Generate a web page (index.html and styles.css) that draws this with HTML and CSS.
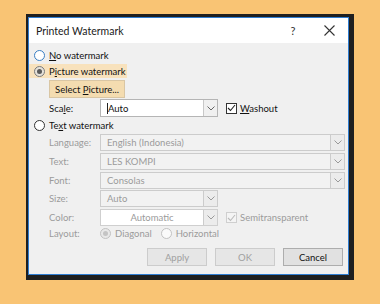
FILE: index.html
```html
<!DOCTYPE html>
<html>
<head>
<meta charset="utf-8">
<link rel="stylesheet" href="styles.css">
</head>
<body>
<div class="frame">
  <div class="dialog">
    <div class="titlebar">
      <span class="title">Printed Watermark</span>
      <span class="help">?</span>
      <span class="close"><svg width="11" height="11" viewBox="0 0 11 11"><path d="M0.5 0.5 L10.5 10.5 M10.5 0.5 L0.5 10.5" stroke="#333" stroke-width="1.1" fill="none"/></svg></span>
    </div>
    <div class="body">
      <div class="radio-row r1"><span class="radio focus"></span><span><u>N</u>o watermark</span></div>
      <div class="radio-row r2 hl"><span class="radio checked"></span><span>P<u>i</u>cture watermark</span></div>
      <div class="indent r3"><span class="btn sel"><span>Select <u>P</u>icture...</span></span></div>
      <div class="field-row r4">
        <span class="lbl">Sca<u>l</u>e:</span>
        <span class="combo short active"><span class="val"><span class="caret"></span><span>Auto</span></span><span class="arrow"><svg width="8" height="5" viewBox="0 0 8 5"><path d="M0.5 0.5 L4 4 L7.5 0.5" stroke="#666" fill="none"/></svg></span></span>
        <span class="check"><span class="box"><svg width="9" height="8" viewBox="0 0 9 8"><path d="M1 4 L3.5 6.5 L8 1" stroke="#222" stroke-width="1.1" fill="none"/></svg></span><span><u>W</u>ashout</span></span>
      </div>
      <div class="radio-row r5"><span class="radio"></span><span>Te<u>x</u>t watermark</span></div>
      <div class="field-row dis r6">
        <span class="lbl">Language:</span>
        <span class="combo long"><span class="val">English (Indonesia)</span><span class="arrow"><svg width="8" height="5" viewBox="0 0 8 5"><path d="M0.5 0.5 L4 4 L7.5 0.5" stroke="#999" fill="none"/></svg></span></span>
      </div>
      <div class="field-row dis r7">
        <span class="lbl">Text:</span>
        <span class="combo long"><span class="val">LES KOMPI</span><span class="arrow"><svg width="8" height="5" viewBox="0 0 8 5"><path d="M0.5 0.5 L4 4 L7.5 0.5" stroke="#999" fill="none"/></svg></span></span>
      </div>
      <div class="field-row dis r8">
        <span class="lbl">Font:</span>
        <span class="combo long"><span class="val">Consolas</span><span class="arrow"><svg width="8" height="5" viewBox="0 0 8 5"><path d="M0.5 0.5 L4 4 L7.5 0.5" stroke="#999" fill="none"/></svg></span></span>
      </div>
      <div class="field-row dis r9">
        <span class="lbl">Size:</span>
        <span class="combo short"><span class="val">Auto</span><span class="arrow"><svg width="8" height="5" viewBox="0 0 8 5"><path d="M0.5 0.5 L4 4 L7.5 0.5" stroke="#999" fill="none"/></svg></span></span>
      </div>
      <div class="field-row dis r10">
        <span class="lbl">Color:</span>
        <span class="combo short white"><span class="val center">Automatic</span><span class="arrow"><svg width="8" height="5" viewBox="0 0 8 5"><path d="M0.5 0.5 L4 4 L7.5 0.5" stroke="#999" fill="none"/></svg></span></span>
        <span class="check dis"><span class="box"><svg width="9" height="8" viewBox="0 0 9 8"><path d="M1 4 L3.5 6.5 L8 1" stroke="#bbb" stroke-width="1.1" fill="none"/></svg></span><span>Semitransparent</span></span>
      </div>
      <div class="field-row dis r11">
        <span class="lbl">Layout:</span>
        <span class="opt"><span class="radio small dchecked"></span><span>Diagonal</span></span>
        <span class="opt"><span class="radio small dis-r"></span><span>Horizontal</span></span>
      </div>
      <div class="buttons">
        <span class="btn dbtn">Apply</span>
        <span class="btn dbtn">OK</span>
        <span class="btn">Cancel</span>
      </div>
    </div>
  </div>
</div>
</body>
</html>
```
FILE: styles.css
```css
* { box-sizing: border-box; }
html, body { margin: 0; padding: 0; }
body {
  background: #f9c474;
  width: 380px;
  height: 304px;
  overflow: hidden;
  font-family: Lato, "Noto Sans", sans-serif;
  font-size: 9.5px;
  color: #111;
}
u { text-decoration: underline; text-underline-offset: 1px; }
.frame {
  margin: 14px 0 0 26px;
  width: 328px;
  height: 266px;
  background: #1f1f1f;
  padding: 3px 5px 5px 2px;
}
.dialog {
  width: 321px;
  height: 258px;
  border: 1px solid #2f7dd1;
  background: #f0f0f0;
  display: flex;
  flex-direction: column;
}
.titlebar {
  height: 25px;
  background: #ffffff;
  display: flex;
  align-items: center;
  padding-left: 7px;
  flex: none;
}
.title { font-size: 10.5px; color: #1a1a1a; flex: 1; }
.help { width: 10px; text-align: center; font-size: 11px; color: #333; margin-right: 26px; }
.close { width: 11px; height: 11px; margin-right: 13px; display: flex; }
.body {
  display: flex;
  flex-direction: column;
  padding: 0 5px 0 0;
  flex: 1;
}
.radio-row {
  display: flex;
  align-items: center;
  height: 14px;
  padding-left: 5px;
  gap: 4px;
}
.radio-row.hl { background: #f8e2bd; width: 98px; }
.r1 { margin-top: 5px; }
.r2 { margin-top: 2px; }
.r3 { margin-top: 2px; }
.r4 { margin-top: 1px; }
.r5 { margin-top: 1px; }
.r6 { margin-top: 2px; }
.r7 { margin-top: 2px; }
.r8 { margin-top: 2px; }
.r9 { margin-top: 1px; }
.r10 { margin-top: 2px; }
.r11 { margin-top: 2px; }
.radio {
  width: 11px;
  height: 11px;
  border-radius: 50%;
  border: 1px solid #333;
  background: #fff;
  flex: none;
  position: relative;
}
.radio.focus { border-color: #3a7fc4; }
.radio.checked { border-color: #7a7a7a; background: #e6e2da; }
.radio.checked::after {
  content: "";
  position: absolute;
  left: 2px; top: 2px;
  width: 5px; height: 5px;
  border-radius: 50%;
  background: #5a5a5a;
}
.radio.small { width: 11px; height: 11px; border-color: #c2c2c2; background: #fafafa; }
.radio.dchecked { background: #e8e8e8; }
.radio.dchecked::after {
  content: "";
  position: absolute;
  left: 2px; top: 2px;
  width: 5px; height: 5px;
  border-radius: 50%;
  background: #c4c4c4;
}
.indent { padding-left: 20px; display: flex; }
.btn {
  display: flex;
  align-items: center;
  justify-content: center;
  height: 18px;
  border: 1px solid #adadad;
  background: #e1e1e1;
  color: #111;
}
.btn.sel {
  width: 76px;
  background: #f4dcb0;
  border-color: #d9c6a4;
}
.field-row {
  display: flex;
  align-items: center;
  padding-left: 20px;
}
.lbl { width: 51px; flex: none; }
.dis .lbl, .dis { color: #9b9b9b; }
.combo {
  display: flex;
  height: 17px;
  border: 1px solid #cccccc;
  background: #f2f2f2;
  flex: none;
}
.r4 .combo { height: 18px; }
.combo.short { width: 118px; }
.combo.long { width: 245px; }
.combo.active { background: #fff; border-color: #b5b5b5; }
.combo.white { background: #fff; border-color: #cfcfcf; }
.val {
  flex: 1;
  display: flex;
  align-items: center;
  padding-left: 6px;
}
.val.center { justify-content: center; padding-left: 0; }
.caret { width: 1px; height: 11px; background: #222; }
.arrow {
  width: 14px;
  display: flex;
  align-items: center;
  justify-content: center;
  border-left: 1px solid #cccccc;
  background: #ececec;
}
.combo.active .arrow { border-left-color: #c8c8c8; background: #f0f0f0; }
.check {
  display: flex;
  align-items: center;
  margin-left: 8px;
  gap: 3px;
}
.check .box {
  width: 11px;
  height: 11px;
  border: 1px solid #333;
  background: #fff;
  display: flex;
  align-items: center;
  justify-content: center;
}
.check.dis .box { border-color: #cfcfcf; background: #f4f4f4; }
.opt { display: flex; align-items: center; gap: 4px; margin-right: 9px; }
.buttons {
  display: flex;
  justify-content: flex-end;
  gap: 8px;
  margin-top: 9px;
}
.buttons .btn { width: 60px; }
.btn.dbtn { color: #a0a0a0; border-color: #cccccc; background: #e6e6e6; }
```
